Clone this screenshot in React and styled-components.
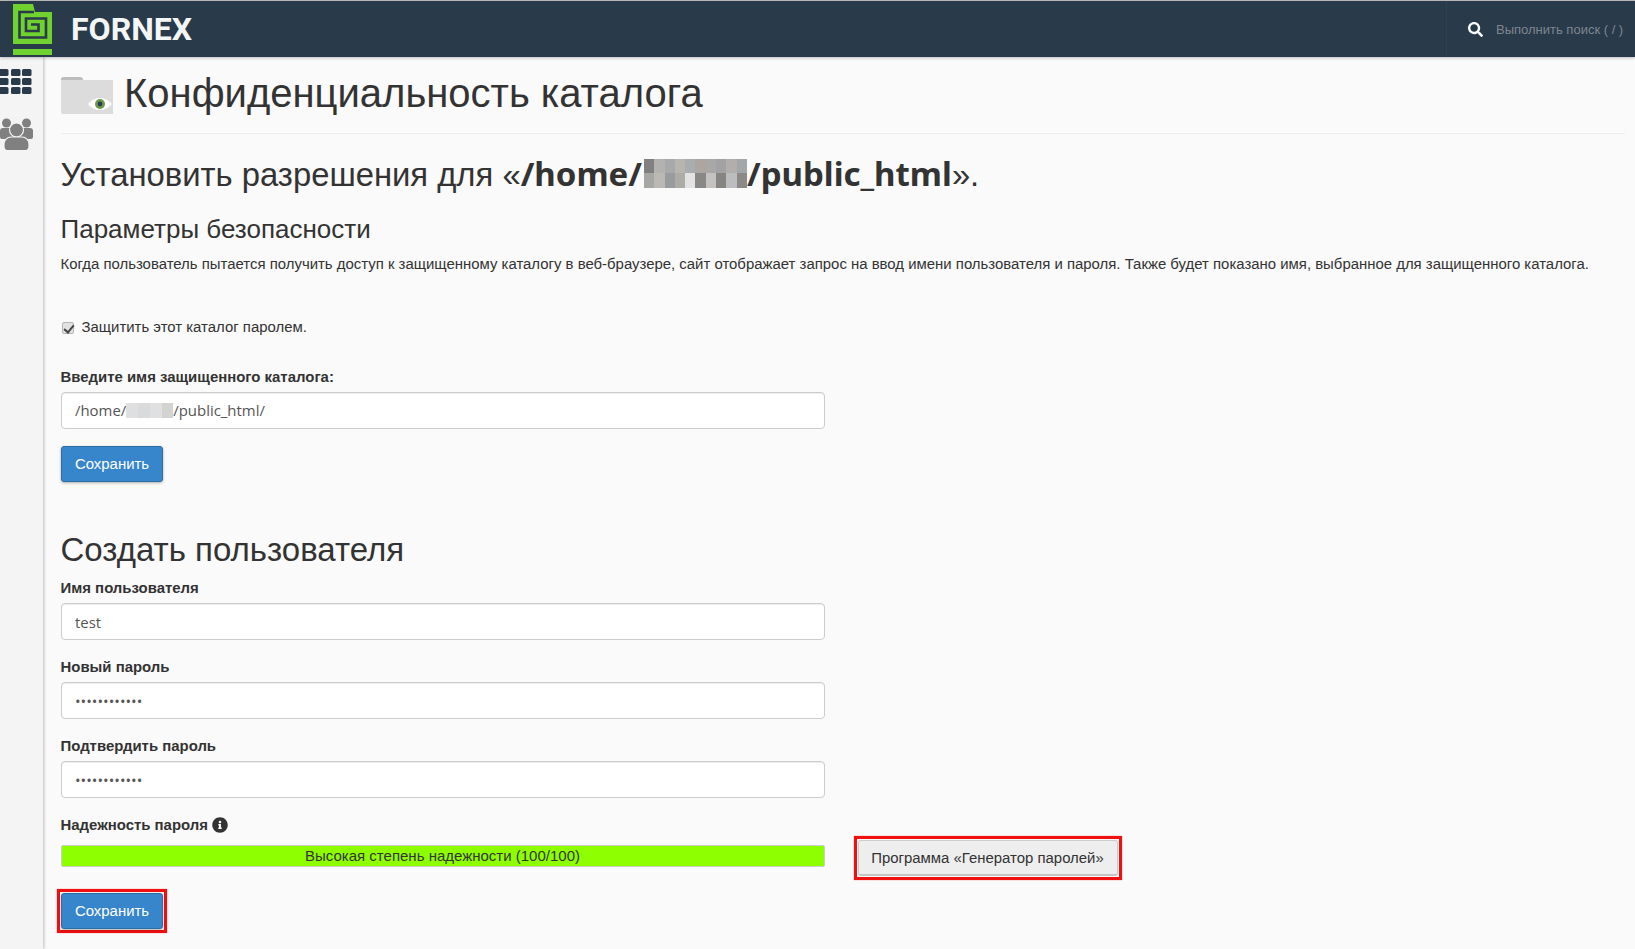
import React from 'react'
import styled, { createGlobalStyle } from 'styled-components'
import { FaSearch, FaInfoCircle } from 'react-icons/fa'

const GlobalStyle = createGlobalStyle`
  * { box-sizing: border-box; }
  html, body { margin: 0; padding: 0; height: 100%; }
  body {
    background: #fafafa;
    color: #333;
    font-family: "Liberation Sans", Arial, sans-serif;
    font-size: 14.93px;
    line-height: 20px;
    overflow: hidden;
  }
`

const TopBar = styled.header`
  height: 57px;
  display: flex;
  align-items: center;
  justify-content: space-between;
  background: #293a4a;
  border-top: 1px solid #b5b5b5;
  box-shadow: 0 1px 3px rgba(0, 0, 0, 0.25);
  position: relative;
  z-index: 2;
`

const Brand = styled.div`
  display: flex;
  align-items: center;
  padding-left: 13px;
  gap: 19px;
`

const BrandName = styled.span`
  font-family: Roboto, sans-serif;
  font-weight: 700;
  font-size: 32px;
  line-height: 32px;
  color: #f4f6f6;
`

const SearchBox = styled.div`
  height: 100%;
  display: flex;
  align-items: center;
  gap: 13px;
  width: 189px;
  padding-left: 21px;
  border-left: 1px solid #2f4051;
  color: #fff;
`

const SearchHint = styled.span`
  color: #7d868f;
  font-size: 13px;
  white-space: nowrap;
  padding-top: 1px;
`

const Body = styled.div`
  display: flex;
  height: 892px;
`

const SideBar = styled.nav`
  width: 43px;
  flex: none;
  background: #f4f4f4;
  box-shadow: 1px 0 3px rgba(0, 0, 0, 0.25);
  display: flex;
  flex-direction: column;
  gap: 24px;
  padding-top: 12px;
`

const Main = styled.main`
  flex: 1;
  padding: 0 10px 0 17.5px;
  min-width: 0;
`

const PageHeader = styled.div`
  display: flex;
  align-items: center;
  gap: 11.5px;
  height: 77px;
  padding-bottom: 4px;
  border-bottom: 1px solid #eee;
`

const PageTitle = styled.h1`
  margin: 0;
  font-size: 40px;
  font-weight: 400;
  line-height: 42px;
  color: #333;
`

const PathTitle = styled.h2`
  margin: 22px 0 0;
  font-size: 32.8px;
  font-weight: 400;
  line-height: 36px;
  white-space: nowrap;
`

const Strong = styled.strong`
  font-family: "Noto Sans", sans-serif;
  font-size: 33px;
  font-weight: 700;
`

const Pixels = styled.span`
  display: inline-grid;
  grid-template-columns: repeat(${p => p.$cols}, ${p => p.$w}px);
  grid-auto-rows: ${p => p.$h}px;
  vertical-align: ${p => p.$align}px;
  margin-left: ${p => p.$left || 0}px;
`

const Pixel = styled.i`
  display: block;
  background: ${p => p.$color};
`

const SectionTitle = styled.h3`
  margin: 21.5px 0 0;
  font-size: 26px;
  font-weight: 400;
  line-height: 28px;
`

const Lead = styled.p`
  margin: 11px 0 0;
  white-space: nowrap;
`

const CheckRow = styled.label`
  display: flex;
  align-items: center;
  gap: 8px;
  margin-top: 43px;
`

const Check = styled.input`
  appearance: none;
  position: relative;
  margin: 2px 0 0 1px;
  width: 12px;
  height: 12px;
  border: 1px solid #b4b4b4;
  border-radius: 2px;
  background: #e2e2e2;
  &::after {
    content: "";
    position: absolute;
    left: 3px;
    top: 0;
    width: 4px;
    height: 8px;
    border-right: 2px solid #444;
    border-bottom: 2px solid #444;
    transform: rotate(40deg);
  }
`

const FormBlock = styled.div`
  margin-top: ${p => p.$top || 0}px;
  width: 764px;
`

const Label = styled.label`
  display: flex;
  align-items: center;
  gap: 4px;
  font-weight: 700;
  margin-bottom: ${p => p.$gap || 5}px;
`

const Field = styled.input`
  display: block;
  width: 100%;
  height: 37px;
  padding: 7px 13.5px 5px;
  border: 1px solid #ccc;
  border-radius: 4px;
  background: #fff;
  color: #555;
  font-family: "Open Sans", sans-serif;
  font-size: 14.93px;
  line-height: 23px;
  box-shadow: inset 0 1px 1px rgba(0, 0, 0, 0.075);
  outline: none;
`

const FieldText = styled(Field).attrs({ as: 'div' })`
  display: flex;
  align-items: center;
  padding-top: 6px;
  padding-bottom: 6px;
`

const PrimaryButton = styled.button`
  display: block;
  width: 102px;
  height: 36px;
  padding: 0 0 0 1px;
  border: 1px solid #2e6da4;
  border-radius: 3px;
  background: #3786cc;
  color: #fff;
  font-family: "Liberation Sans", Arial, sans-serif;
  font-size: 14.93px;
  box-shadow: 0 1px 3px rgba(0, 0, 0, 0.3);
`

const Callout = styled.div`
  border: 3px solid #f01010;
  padding: 1px;
  display: inline-flex;
  box-shadow: 0 0 1px rgba(255, 0, 0, 0.6);
`

const CreateTitle = styled.h2`
  margin: 50px 0 0;
  font-size: 33px;
  font-weight: 400;
  line-height: 36px;
`

const MeterRow = styled.div`
  display: flex;
  align-items: flex-start;
`

const MeterColumn = styled.div`
  width: 764px;
`

const Meter = styled.div`
  height: 22px;
  border: 1px solid #ccc;
  border-radius: 2px;
  background: #8eff00;
  color: #333;
  text-align: center;
  font-size: 15px;
  line-height: 20px;
`

const GeneratorSlot = styled.div`
  margin: 38px 0 0 29px;
`

const DefaultButton = styled.button`
  display: block;
  width: 260px;
  height: 36px;
  padding: 0;
  border: 1px solid #ccc;
  border-bottom: 2px solid #c4c4c4;
  border-radius: 3px;
  background: #eee;
  color: #333;
  font-family: "Liberation Sans", Arial, sans-serif;
  font-size: 14.93px;
  white-space: nowrap;
`

const CalloutRow = styled.div`
  margin: 9px 0 0 -4px;
`

const FolderSvg = styled.svg`
  margin-top: 4px;
  flex: none;
`

const Logo = () => (
  <svg width="39" height="51" viewBox="0 0 39 51">
    <path
      fill="#70d22e"
      d="M0 0H20L22 8H39V40H22V45H39V51H0V45H16V40H0Z"
    />
    <path
      fill="none"
      stroke="#293a4a"
      strokeWidth="2.6"
      d="M21 8H6.5V33.5H33V14.5H13V27H25.5V20.5H18"
    />
    <path fill="#293a4a" d="M0 40H39V41.5H22V45H16V41.5H0Z" />
  </svg>
)

const FolderIcon = () => (
  <FolderSvg width="52" height="38" viewBox="0 0 52 38">
    <path fill="#dcdcdc" d="M0 3a2 2 0 0 1 2-2h17a2 2 0 0 1 2 2v1h31v34H2a2 2 0 0 1-2-2z" />
    <path fill="#bdbdbd" d="M0 4a3 3 0 0 1 3-3h16a3 3 0 0 1 3 3z" />
    <path fill="#fff" d="M27 28c6-8 17-8 24 0-7 8-18 8-24 0z" />
    <circle cx="39" cy="28" r="5" fill="#6c9a4c" />
    <circle cx="39" cy="28" r="2.4" fill="#2c3e50" />
  </FolderSvg>
)

const GridIcon = () => (
  <svg width="32" height="25" viewBox="0 0 32 25">
    {[0, 9, 18].map(y =>
      [-1, 11, 22].map(x => (
        <rect key={`${x}-${y}`} x={x} y={y} width="9.5" height="7" rx="1.5" fill="#293a4a" />
      ))
    )}
  </svg>
)

const UsersIcon = () => (
  <svg width="34" height="33" viewBox="0 0 34 33">
    <g fill="#808080">
      <circle cx="6.5" cy="5" r="4.5" />
      <circle cx="26.5" cy="5" r="4.5" />
      <path d="M0 13a3 3 0 0 1 3-3h7a3 3 0 0 1 3 3v8H2a2 2 0 0 1-2-2z" />
      <path d="M33 13a3 3 0 0 0-3-3h-7a3 3 0 0 0-3 3v8h11a2 2 0 0 0 2-2z" />
      <g stroke="#f4f4f4" strokeWidth="1.2">
        <circle cx="16.5" cy="12" r="7" />
        <path d="M4 26a7 7 0 0 1 7-7h11a7 7 0 0 1 7 7v3a3.5 3.5 0 0 1-3.5 3.5h-19A3.5 3.5 0 0 1 4 29z" />
      </g>
    </g>
  </svg>
)

const headingPixels = [
  '#808080', '#b4b2b0', '#a8a9ab', '#b8b5b1', '#a9adb0', '#aca5a0', '#a8a8a8', '#a2a2a4', '#b1aeab', '#a3a6a9',
  '#a6a6a4', '#bcb9b5', '#999c9e', '#aeaca7', '#e2e3e2', '#8a8886', '#c4c3c2', '#868582', '#bcbdbe', '#8c8a86',
]
const fieldPixels = ['#dfdfdf', '#d9dadb', '#e0e0e0', '#d3d3d1']

const App = () => {
  return (
    <>
      <GlobalStyle />
      <TopBar>
        <Brand>
          <Logo />
          <BrandName>FORNEX</BrandName>
        </Brand>
        <SearchBox>
          <FaSearch size={15} />
          <SearchHint>Выполнить поиск ( / )</SearchHint>
        </SearchBox>
      </TopBar>
      <Body>
        <SideBar>
          <GridIcon />
          <UsersIcon />
        </SideBar>
        <Main>
          <PageHeader>
            <FolderIcon />
            <PageTitle>Конфиденциальность каталога</PageTitle>
          </PageHeader>
          <PathTitle>
            Установить разрешения для «<Strong>/home/</Strong>
            <Pixels $cols={10} $w={10.3} $h={14.5} $align={13} $left={2}>
              {headingPixels.map((c, i) => <Pixel key={i} $color={c} />)}
            </Pixels>
            <Strong>/public_html</Strong>».
          </PathTitle>
          <SectionTitle>Параметры безопасности</SectionTitle>
          <Lead>
            Когда пользователь пытается получить доступ к защищенному каталогу в веб-браузере, сайт отображает запрос на ввод имени пользователя и пароля. Также будет показано имя, выбранное для защищенного каталога.
          </Lead>
          <CheckRow>
            <Check type="checkbox" defaultChecked />
            Защитить этот каталог паролем.
          </CheckRow>
          <FormBlock $top={30}>
            <Label>Введите имя защищенного каталога:</Label>
            <FieldText>
              /home/
              <Pixels $cols={4} $w={11.75} $h={15} $align={0}>
                {fieldPixels.map((c, i) => <Pixel key={i} $color={c} />)}
              </Pixels>
              /public_html/
            </FieldText>
          </FormBlock>
          <FormBlock $top={17}>
            <PrimaryButton>Сохранить</PrimaryButton>
          </FormBlock>
          <CreateTitle>Создать пользователя</CreateTitle>
          <FormBlock $top={10}>
            <Label>Имя пользователя</Label>
            <Field defaultValue="test" />
          </FormBlock>
          <FormBlock $top={17}>
            <Label>Новый пароль</Label>
            <Field type="password" defaultValue="qwertyuiopas" />
          </FormBlock>
          <FormBlock $top={17}>
            <Label>Подтвердить пароль</Label>
            <Field type="password" defaultValue="qwertyuiopas" />
          </FormBlock>
          <MeterRow>
            <MeterColumn>
              <FormBlock $top={17}>
                <Label $gap={10}>
                  Надежность пароля
                  <FaInfoCircle size={16} color="#333" />
                </Label>
                <Meter>Высокая степень надежности (100/100)</Meter>
              </FormBlock>
            </MeterColumn>
            <GeneratorSlot>
              <Callout>
                <DefaultButton>Программа «Генератор паролей»</DefaultButton>
              </Callout>
            </GeneratorSlot>
          </MeterRow>
          <CalloutRow>
            <Callout>
              <PrimaryButton>Сохранить</PrimaryButton>
            </Callout>
          </CalloutRow>
        </Main>
      </Body>
    </>
  )
}

export default App
